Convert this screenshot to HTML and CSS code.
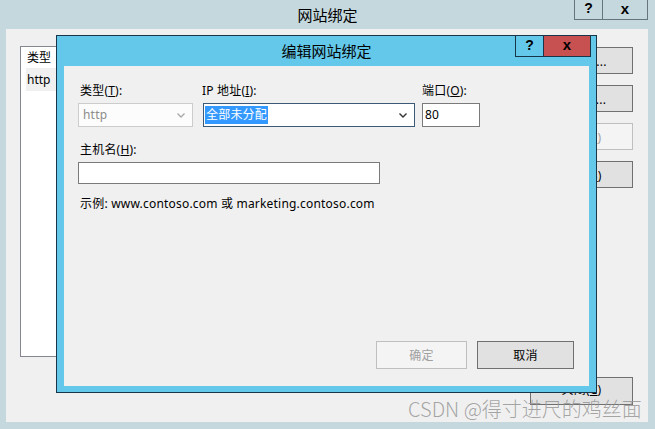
FILE: index.html
```html
<!DOCTYPE html>
<html lang="zh-CN">
<head>
<meta charset="utf-8">
<title>网站绑定</title>
<link rel="stylesheet" href="styles.css">
</head>
<body>
<div class="screen">
  <div class="outer-titlebar">
    <span class="outer-title">网站绑定</span>
    <div class="outer-caps">
      <span class="ocap ocap-help">?</span>
      <span class="ocap ocap-close">x</span>
    </div>
  </div>
  <div class="outer-body">
    <div class="outer-main">
      <div class="listbox">
        <div class="list-header"><span class="col-type">类型</span></div>
        <div class="list-row"><span class="col-type">http</span></div>
      </div>
      <div class="side-btns">
        <button class="btn side-btn">添加(<u>A</u>)...</button>
        <button class="btn side-btn">编辑(<u>E</u>)...</button>
        <button class="btn side-btn disabled">删除(<u>R</u>)</button>
        <button class="btn side-btn">浏览(<u>B</u>)</button>
      </div>
    </div>
    <div class="outer-footer">
      <button class="btn close-btn">关闭(<u>C</u>)</button>
    </div>
  </div>

  <div class="dialog">
    <div class="dlg-titlebar">
      <span class="dlg-title">编辑网站绑定</span>
      <div class="dlg-caps">
        <span class="dcap dcap-help">?</span>
        <span class="dcap dcap-close">x</span>
      </div>
    </div>
    <div class="dlg-content">
      <div class="row-fields">
        <div class="field field-type">
          <label class="lbl lbl-first">类型(<u>T</u>):</label>
          <div class="select select-disabled">
            <span class="select-text">http</span>
            <svg class="chev" width="8" height="5" viewBox="0 0 8 5"><polyline points="0.5,0.5 4,4 7.5,0.5" fill="none" stroke="#a8a8a8" stroke-width="1.3"/></svg>
          </div>
        </div>
        <div class="field field-ip">
          <label class="lbl">IP 地址(<u>I</u>):</label>
          <div class="select select-active">
            <span class="select-text hl">全部未分配</span>
            <svg class="chev" width="8" height="5" viewBox="0 0 8 5"><polyline points="0.5,0.5 4,4 7.5,0.5" fill="none" stroke="#333" stroke-width="1.4"/></svg>
          </div>
        </div>
        <div class="field field-port">
          <label class="lbl">端口(<u>O</u>):</label>
          <div class="textbox port-box">80</div>
        </div>
      </div>
      <div class="field field-host">
        <label class="lbl lbl-first">主机名(<u>H</u>):</label>
        <div class="textbox host-box"></div>
      </div>
      <p class="example">示例: www.contoso.com 或 marketing.contoso.com</p>
      <div class="dlg-buttons">
        <button class="btn ok-btn disabled">确定</button>
        <button class="btn cancel-btn">取消</button>
      </div>
    </div>
  </div>

  <div class="watermark">CSDN @得寸进尺的鸡丝面</div>
</div>
</body>
</html>
```

FILE: styles.css
```css
* { box-sizing: border-box; }

html, body {
  margin: 0;
  padding: 0;
}

body {
  font-family: "Noto Sans", "Noto Sans CJK SC", sans-serif;
  font-size: 12px;
  color: #000;
}

u { text-decoration: underline; text-underline-offset: 1px; }

.screen {
  position: relative;
  width: 655px;
  height: 429px;
  background: #c5d8de;
  overflow: hidden;
}

/* ---------- outer window ---------- */
.outer-titlebar {
  display: grid;
  grid-template-columns: 1fr auto 1fr;
  height: 29px;
}

.outer-title {
  grid-column: 2;
  font-family: "Noto Sans CJK SC", sans-serif;
  font-size: 15px;
  line-height: 29px;
  color: #000;
}

.outer-caps {
  grid-column: 3;
  justify-self: end;
  align-self: start;
  display: flex;
  margin-right: 7px;
}

.ocap {
  height: 20px;
  border: 1px solid #66757b;
  border-top: none;
  font-family: "Liberation Sans", sans-serif;
  font-weight: bold;
  font-size: 14px;
  line-height: 17px;
  text-align: center;
  color: #000;
}

.ocap-help { width: 29px; }
.ocap-close { width: 45px; border-left: none; font-size: 15px; }

.outer-body {
  margin: 0 7px 0 6px;
  height: 393px;
  background: #f0f0f0;
  padding: 17px 15px 0 14px;
  display: flex;
  flex-direction: column;
}

.outer-main {
  display: flex;
}

.listbox {
  width: 498px;
  height: 311px;
  background: #fff;
  border: 1px solid #828790;
  padding: 1px 5px;
}

.list-header {
  height: 19px;
  line-height: 20px;
}

.list-row {
  height: 23px;
  line-height: 23px;
  background: #f0f0f0;
  margin-top: 1px;
}

.col-type { padding-left: 1px; }

.side-btns {
  display: flex;
  flex-direction: column;
  gap: 11px;
  margin-left: 12px;
  margin-top: 1px;
}

.btn {
  font-family: "Noto Sans", "Noto Sans CJK SC", sans-serif;
  font-size: 12px;
  letter-spacing: 0.2px;
  color: #000;
  background: #e1e1e1;
  border: 1px solid #707070;
  padding: 0;
  margin: 0;
}

.btn.disabled {
  background: #f4f4f4;
  border-color: #bfbfbf;
  color: #a0a0a0;
}

.side-btn {
  width: 103px;
  height: 27px;
}

.outer-footer {
  display: flex;
  justify-content: flex-end;
  margin-top: 20px;
}

.close-btn {
  width: 103px;
  height: 28px;
  padding-bottom: 4px;
}

/* ---------- dialog ---------- */
.dialog {
  position: absolute;
  left: 56px;
  top: 35px;
  width: 541px;
  height: 358px;
  background: #64c8ea;
  border: 1px solid #18364a;
  display: flex;
  flex-direction: column;
}

.dlg-titlebar {
  display: grid;
  grid-template-columns: 1fr auto 1fr;
  height: 30px;
  flex: none;
}

.dlg-title {
  grid-column: 2;
  font-family: "Noto Sans CJK SC", sans-serif;
  font-size: 15px;
  line-height: 29px;
  color: #000;
}

.dlg-caps {
  grid-column: 3;
  justify-self: end;
  align-self: start;
  display: flex;
  margin-right: 5px;
}

.dcap {
  height: 21px;
  border: 1px solid #18364a;
  border-top: none;
  font-family: "Liberation Sans", sans-serif;
  font-weight: bold;
  font-size: 14px;
  line-height: 18px;
  text-align: center;
  color: #000;
}

.dcap-help { width: 29px; }
.dcap-close {
  width: 47px;
  border-left: none;
  background: #c75050;
  font-size: 15px;
}

.dlg-content {
  flex: 1;
  margin: 0 7px 6px 7px;
  background: #f0f0f0;
  padding: 17px 15px 17px 14px;
  display: flex;
  flex-direction: column;
  letter-spacing: 0.2px;
}

.row-fields {
  display: flex;
}

.field {
  display: flex;
  flex-direction: column;
}

.lbl {
  display: block;
  height: 16px;
  line-height: 16px;
  margin-bottom: 4px;
}

.lbl-first { padding-left: 2px; }

.field-type { width: 115px; }
.field-ip { width: 212px; margin-left: 10px; }
.field-ip .lbl { margin-left: -1px; }
.field-port { width: 58px; margin-left: 7px; }

.select {
  height: 24px;
  display: flex;
  align-items: center;
  justify-content: space-between;
  background: #fff;
  padding: 0 7px 0 1px;
}

.select-disabled {
  border: 1px solid #cccccc;
  color: #8c8c8c;
  padding-left: 3px;
  background: #fcfcfc;
}

.select-active {
  border: 1px solid #3c5a78;
}

.select-text {
  line-height: 18px;
  padding: 0 1px;
}

.hl {
  background: #3399ff;
  color: #fff;
}

.chev { display: block; flex: none; }

.textbox {
  background: #fff;
  border: 1px solid #7a7a7a;
}

.port-box {
  height: 24px;
  line-height: 22px;
  padding-left: 2px;
}

.field-host {
  margin-top: 15px;
  width: 302px;
}

.host-box {
  height: 22px;
}

.example {
  margin: 11px 0 0 2px;
  line-height: 17px;
}

.dlg-buttons {
  margin-top: auto;
  display: flex;
  justify-content: flex-end;
  gap: 10px;
}

.ok-btn { width: 91px; height: 28px; }
.cancel-btn { width: 97px; height: 28px; }

/* ---------- watermark ---------- */
.watermark {
  position: absolute;
  left: 408px;
  top: 395px;
  font-family: "Noto Sans CJK SC", sans-serif;
  font-weight: 300;
  font-size: 20px;
  line-height: 27px;
  color: rgba(150, 150, 150, 0.85);
  white-space: nowrap;
}
```
